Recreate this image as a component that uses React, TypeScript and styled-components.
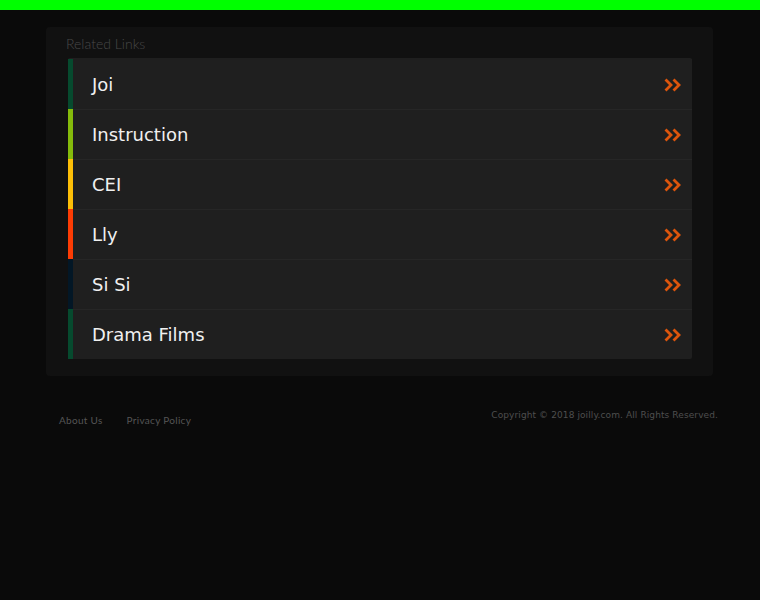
import React from 'react';
import styled, { createGlobalStyle } from 'styled-components';

const GlobalStyle = createGlobalStyle`
  html, body {
    margin: 0;
    padding: 0;
    background: #0a0a0a;
    font-family: 'DejaVu Sans', sans-serif;
  }
`;

interface LinkItem {
  title: string;
  color: string;
}

const links: LinkItem[] = [
  { title: 'Joi', color: '#064a2e' },
  { title: 'Instruction', color: '#85bb0b' },
  { title: 'CEI', color: '#fdbf07' },
  { title: 'Lly', color: '#fd3c04' },
  { title: 'Si Si', color: '#031726' },
  { title: 'Drama Films', color: '#064a2e' }
];

const TopBar = styled.div`
  height: 10px;
  background: #00ff00;
`;

const Page = styled.div`
  min-height: 590px;
  padding-top: 17px;
`;

const Card = styled.section`
  width: 667px;
  margin-left: 46px;
  box-sizing: border-box;
  background: #111111;
  border-radius: 4px;
  padding: 9px 21px 17px 22px;
`;

const Heading = styled.h3`
  margin: 0 0 6px -2px;
  font-family: Lato, sans-serif;
  font-weight: 300;
  font-size: 14px;
  line-height: 16px;
  color: #484848;
`;

const List = styled.ul`
  list-style: none;
  margin: 0;
  padding: 1px 0 0;
  background: #1f1f1f;
  border-radius: 2px;
`;

const Row = styled.li`
  display: flex;
  height: 50px;
`;

const Bar = styled.span<{ $color: string }>`
  width: 5px;
  background: ${p => p.$color};
`;

const Content = styled.a<{ $first?: boolean }>`
  flex: 1;
  display: flex;
  align-items: center;
  justify-content: space-between;
  padding: 0 9px 0 19px;
  border-top: 1px solid ${p => (p.$first ? '#1f1f1f' : '#262626')};
  color: #f0f0f0;
  font-size: 18px;
  text-decoration: none;
`;

const Chevrons = styled.svg`
  width: 20px;
  height: 16px;
  flex-shrink: 0;
`;

const Footer = styled.footer`
  display: flex;
  justify-content: space-between;
  align-items: flex-start;
  padding: 33px 42px 0 59px;
`;

const FooterLinks = styled.nav`
  display: flex;
  gap: 24px;
  padding-top: 5px;
`;

const FooterLink = styled.a`
  font-family: Lato, sans-serif;
  font-size: 10px;
  color: #555555;
  letter-spacing: 0.3px;
  text-decoration: none;
`;

const Copyright = styled.p`
  margin: 0;
  padding-top: 1px;
  font-size: 9px;
  letter-spacing: 0.1px;
  color: #4e4e4e;
`;

const DoubleAngle = () => (
  <Chevrons viewBox="0 0 20 16">
    <path
      d="M2.5 2.5 L8 8 L2.5 13.5 M10.5 2.5 L16 8 L10.5 13.5"
      fill="none"
      stroke="#dd550c"
      strokeWidth="2.8"
      strokeLinecap="butt"
      strokeLinejoin="miter"
    />
  </Chevrons>
);

const App = () => {
  return (
    <>
      <GlobalStyle />
      <TopBar />
      <Page>
        <Card>
          <Heading>Related Links</Heading>
          <List>
            {links.map((link, i) => (
              <Row key={link.title}>
                <Bar $color={link.color} />
                <Content href="#" $first={i === 0}>
                  {link.title}
                  <DoubleAngle />
                </Content>
              </Row>
            ))}
          </List>
        </Card>
        <Footer>
          <FooterLinks>
            <FooterLink href="#">About Us</FooterLink>
            <FooterLink href="#">Privacy Policy</FooterLink>
          </FooterLinks>
          <Copyright>Copyright © 2018 joilly.com. All Rights Reserved.</Copyright>
        </Footer>
      </Page>
    </>
  );
};

export default App;
